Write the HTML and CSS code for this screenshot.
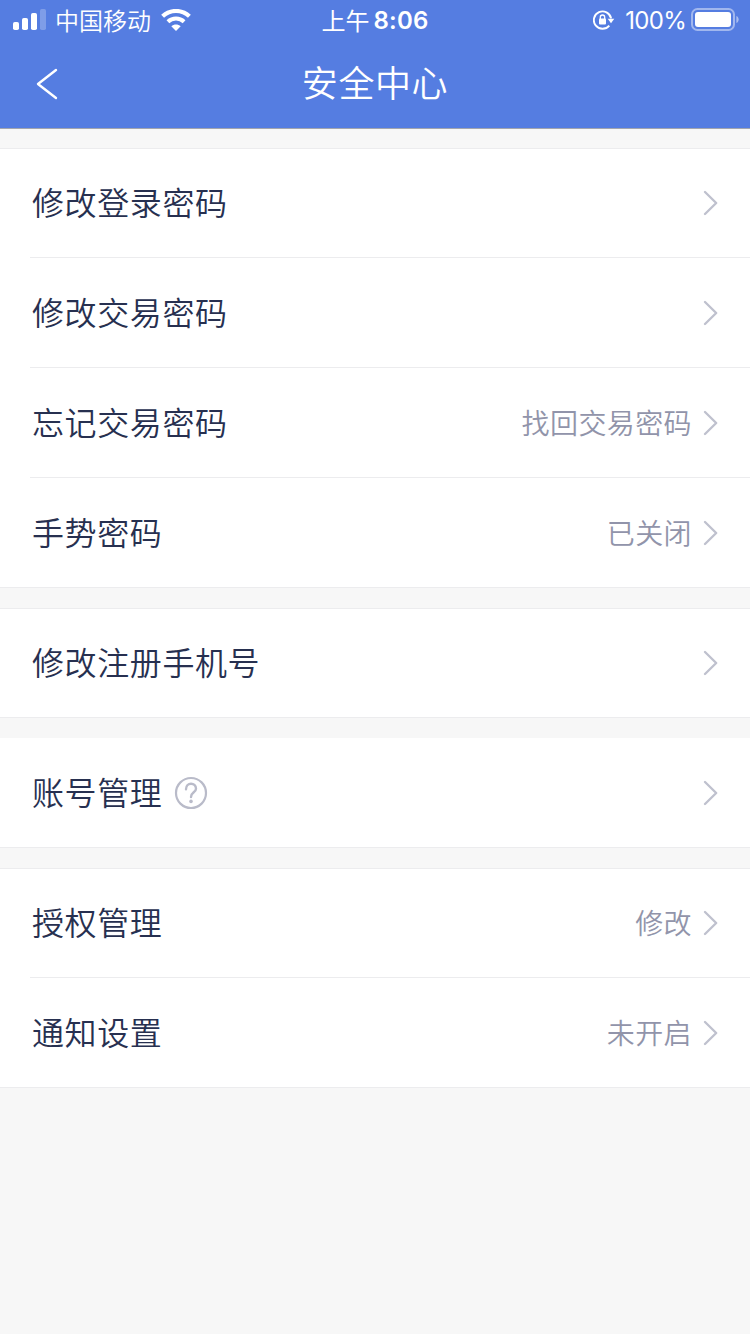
FILE: index.html
```html
<!DOCTYPE html>
<html lang="zh-CN">
<head>
<meta charset="utf-8">
<title>安全中心</title>
<link rel="stylesheet" href="styles.css">
</head>
<body>
<svg class="defs" width="0" height="0" aria-hidden="true">
  <symbol id="chevron" viewBox="0 0 16 28"><path d="M2 3 L13.2 14 L2 25" fill="none" stroke="currentColor" stroke-width="2.4" stroke-linecap="round" stroke-linejoin="round"/></symbol>
</svg>
<header class="header">
  <div class="status">
    <div class="status-left">
      <svg class="signal" width="34" height="22" viewBox="0 0 34 22" fill="#fff">
        <rect x="0" y="13" width="6" height="8" rx="1.8"/>
        <rect x="9" y="9" width="6" height="12" rx="1.8"/>
        <rect x="18" y="4" width="6" height="17" rx="1.8"/>
        <rect x="27" y="0" width="6" height="21" rx="1.8" opacity=".25"/>
      </svg>
      <span class="carrier">中国移动</span>
      <svg class="wifi" width="30" height="22" viewBox="0 0 30 22" fill="none" stroke="#fff">
        <path d="M1.6 7.3 C9.2 .2 20.8 .2 28.4 7.3" stroke-width="4.2"/>
        <path d="M6.9 12.8 C11.5 8.5 18.5 8.5 23.1 12.8" stroke-width="4"/>
        <path d="M10.3 17.3 C13 14.9 17 14.9 19.7 17.3 L15 22 Z" fill="#fff" stroke="none"/>
      </svg>
    </div>
    <div class="status-time"><span class="meridiem">上午</span><span class="clock">8:06</span></div>
    <div class="status-right">
      <svg class="lock" width="22" height="20" viewBox="0 0 22 20" fill="none" stroke="#fff">
        <path d="M16.3 15.6 A8.7 8.7 0 1 1 18.1 8.4" stroke-width="1.9"/>
        <path d="M14.7 8.7 H21.3 L18 13.2 Z" fill="#fff" stroke="none"/>
        <rect x="6" y="8.4" width="7" height="6.1" rx="1" fill="#fff" stroke="none"/>
        <path d="M7.3 9 V7.2 A2.2 2.2 0 0 1 11.7 7.2 V9" stroke-width="1.3"/>
      </svg>
      <span class="percent">100%</span>
      <svg class="battery" width="48" height="23" viewBox="0 0 48 23">
        <rect x="1" y="1" width="42" height="21" rx="5.5" fill="none" stroke="#fff" stroke-opacity=".45" stroke-width="2"/>
        <rect x="4" y="4" width="36" height="15" rx="3" fill="#fff"/>
        <path d="M45.4 8 C48.4 9.2 48.4 13.8 45.4 15 Z" fill="#fff" opacity=".5"/>
      </svg>
    </div>
  </div>
  <nav class="navbar">
    <svg class="back" width="24" height="34" viewBox="0 0 24 34"><path d="M21 3 L3 17 L21 31" fill="none" stroke="#fff" stroke-width="2.4" stroke-linecap="round" stroke-linejoin="round"/></svg>
    <h1 class="title">安全中心</h1>
  </nav>
</header>
<main class="groups">
  <section class="group">
    <div class="row"><span class="label">修改登录密码</span><svg class="chevron"><use href="#chevron"/></svg></div>
    <div class="row"><span class="label">修改交易密码</span><svg class="chevron"><use href="#chevron"/></svg></div>
    <div class="row"><span class="label">忘记交易密码</span><span class="value">找回交易密码</span><svg class="chevron"><use href="#chevron"/></svg></div>
    <div class="row"><span class="label">手势密码</span><span class="value">已关闭</span><svg class="chevron"><use href="#chevron"/></svg></div>
  </section>
  <section class="group">
    <div class="row"><span class="label">修改注册手机号</span><svg class="chevron"><use href="#chevron"/></svg></div>
  </section>
  <section class="group group-plain">
    <div class="row"><span class="label">账号管理</span>
      <svg class="help" width="34" height="34" viewBox="0 0 34 34" fill="none" stroke="#b9bbc9" stroke-linecap="round">
        <circle cx="17" cy="17" r="15" stroke-width="2.2"/>
        <path d="M12 13.2 C12 5.9 22 6 22 12.7 C22 16.4 17 16.3 17 21" stroke-width="2.4"/>
        <circle cx="17" cy="25.4" r="1.8" fill="#b9bbc9" stroke="none"/>
      </svg>
      <svg class="chevron"><use href="#chevron"/></svg></div>
  </section>
  <section class="group">
    <div class="row"><span class="label">授权管理</span><span class="value">修改</span><svg class="chevron"><use href="#chevron"/></svg></div>
    <div class="row"><span class="label">通知设置</span><span class="value">未开启</span><svg class="chevron"><use href="#chevron"/></svg></div>
  </section>
</main>
</body>
</html>
```
FILE: styles.css
```css
* { box-sizing: border-box; }
body {
  margin: 0;
  min-height: 1334px;
  background: #f7f7f7;
  font-family: "Noto Sans CJK SC", sans-serif;
  color: #273050;
}
svg { display: block; flex: none; }
.defs { position: absolute; }
.header {
  height: 129px;
  background: #557de1;
  border-bottom: 1px solid #a2a5ae;
  color: #fff;
}
.status {
  display: grid;
  grid-template-columns: 1fr auto 1fr;
  height: 40px;
  padding: 0 11px 0 13px;
  align-items: center;
  line-height: 40px;
}
.status-left, .status-time, .status-right { display: flex; align-items: center; height: 40px; }
.status-right { justify-content: flex-end; }
.carrier { margin-left: 8px; font-size: 24px; font-weight: 350; }
.wifi { margin-left: 10px; }
.status-time { margin-left: -2px; }
.meridiem { font-size: 24px; }
.clock {
  margin-left: 4px;
  padding-top: 2px;
  font-family: Inter, sans-serif;
  font-size: 24px;
  font-weight: 600;
  letter-spacing: .2px;
}
.percent {
  margin: 0 5px 0 10px;
  padding-top: 2px;
  font-family: Inter, sans-serif;
  font-size: 24px;
  letter-spacing: -.7px;
}
.battery { margin-bottom: 1px; }
.navbar {
  display: grid;
  grid-template-columns: 60px 1fr 60px;
  align-items: center;
  height: 88px;
}
.back { margin-left: 35px; }
.title {
  margin: 0;
  padding-bottom: 6px;
  font-size: 36px;
  font-weight: 350;
  line-height: 52px;
  letter-spacing: .6px;
  text-align: center;
}
.groups {
  display: flex;
  flex-direction: column;
  gap: 20px;
  padding-top: 19px;
}
.group {
  background: #fff;
  box-shadow: inset 0 1px #ececee, inset 0 -1px #ececee;
}
.group-plain { box-shadow: inset 0 -1px #ececee; }
.row {
  display: flex;
  align-items: center;
  height: 110px;
  margin-left: 30px;
  padding: 0 31px 0 2px;
  border-bottom: 1px solid #ececee;
}
.row:last-child { border-bottom-color: transparent; }
.label {
  padding-bottom: 3px;
  font-size: 32px;
  font-weight: 350;
  letter-spacing: .6px;
  line-height: 46px;
}
.value {
  margin-left: auto;
  margin-right: 11px;
  padding-bottom: 1px;
  font-size: 28px;
  font-weight: 350;
  letter-spacing: .4px;
  line-height: 40px;
  color: #9194aa;
}
.chevron { width: 16px; height: 28px; color: #bfc1ce; }
.label + .chevron, .help + .chevron { margin-left: auto; }
.help { margin-left: 12px; }
```
